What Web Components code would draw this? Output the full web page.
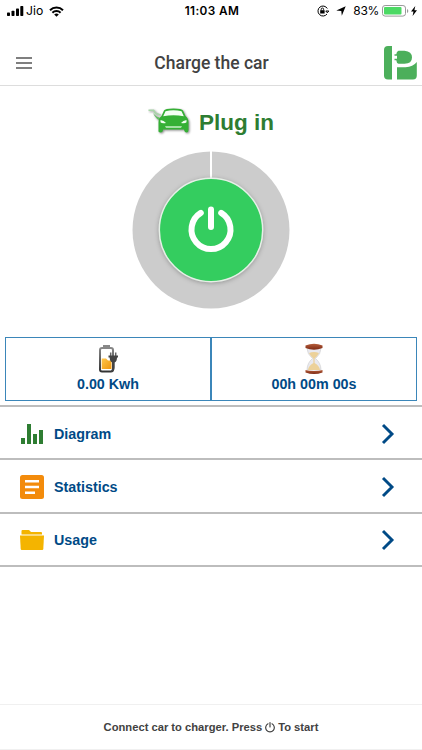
<!DOCTYPE html>
<html lang="en">
<head>
<meta charset="utf-8">
<title>Charge the car</title>
<style>
	body {
		margin: 0;
		background: #fff;
		font-family: "Liberation Sans", Arial, sans-serif;
	}
</style>
</head>
<body>
<charge-app></charge-app>

<script>
class BaseElement extends HTMLElement {
	constructor() {
		super();
		this.attachShadow({ mode: 'open' }).innerHTML = `${this._css()}${this._html()}`;
	}
}

class StatusBar extends BaseElement {
	_html() {
		return `
			<div class="left">
				<svg width="17" height="10" viewBox="0 0 17 10">
					<rect x="0" y="6.5" width="3" height="3.5" rx=".7"/>
					<rect x="4.5" y="4.7" width="3" height="5.3" rx=".7"/>
					<rect x="9" y="2.5" width="3" height="7.5" rx=".7"/>
					<rect x="13.3" y="0" width="3" height="10" rx=".7"/>
				</svg>
				<span class="carrier">Jio</span>
				<svg width="15" height="11" viewBox="0 0 15 11" fill="none" stroke="#000" stroke-width="2">
					<path d="M1 4.2a9.2 9.2 0 0 1 13 0"/>
					<path d="M3.4 6.7a5.8 5.8 0 0 1 8.2 0"/>
					<path d="M7.5 10.8 5.2 8.5a3.3 3.3 0 0 1 4.6 0z" fill="#000" stroke="none"/>
				</svg>
			</div>
			<span class="time">11:03 AM</span>
			<div class="right">
				<svg width="12" height="12" viewBox="0 0 12 12" fill="none" stroke="#000">
					<path d="M10.3 3.5A5 5 0 1 0 10 9M8.8 6h3l-1.5 1.8z" stroke-width="1"/>
					<rect x="3.2" y="5.2" width="4.4" height="3.3" fill="#000" stroke="none"/>
					<path d="M4.2 5.3V4.2a1.2 1.2 0 0 1 2.4 0v1.1" stroke-width=".9"/>
				</svg>
				<svg class="arrow" width="10" height="10" viewBox="0 0 10 10"><path d="M9.7.3 5.8 9.7 5.3 4.9.3 4.4z"/></svg>
				<span class="percent">83%</span>
				<svg class="battery" width="27" height="12" viewBox="0 0 27 12">
					<rect x=".5" y=".5" width="23" height="10.6" rx="2.6" fill="#fff" stroke="#999"/>
					<rect x="2" y="2" width="17.5" height="7.6" rx="1" fill="#4cd964"/>
					<path d="M25 4v4q1.3-.5 1.3-2T25 4" fill="#999"/>
				</svg>
				<svg width="6" height="10" viewBox="0 0 6 10"><path d="M4.3 0 0 5.6h2.5L1.6 10 6 4.2H3.4z"/></svg>
			</div>
		`;
	}

	_css() {
		return `
			<style>
				:host {
					display: grid;
					grid-template-columns: 1fr auto 1fr;
					align-items: center;
					height: 22px;
					padding: 0 5px 0 7px;
					box-sizing: border-box;
					color: #000;
					font: 12px/22px Inter, sans-serif;
				}
				.left, .right {
					display: flex;
					align-items: center;
				}
				.right {
					justify-content: flex-end;
				}
				.carrier {
					margin: 0 6px 0 2px;
					font-size: 12.2px;
				}
				.time {
					font-weight: 600;
					font-size: 11.8px;
					letter-spacing: .4px;
				}
				.percent {
					letter-spacing: -.3px;
				}
				.arrow {
					margin: 0 7px;
				}
				.battery {
					margin: 0 2px 0 3px;
				}
			</style>
		`;
	}
}

class AppHeader extends BaseElement {
	_html() {
		return `
			<svg class="menu" width="16" height="12" viewBox="0 0 16 12" stroke="#555" stroke-width="1.4">
				<path d="M0 1h16M0 6h16M0 11h16"/>
			</svg>
			<h1><slot></slot></h1>
			<svg class="logo" width="33" height="34" viewBox="0 0 33 34" fill="#4caf5b">
				<path d="M4 0H8V33.500H4Q0 33.500 0 29.500V4Q0 0 4 0z"/>
				<path d="M14.500 4.700H20.500Q28 5.300 28 11.500T20.500 17.800H14.500Q12.500 17 12.300 14.200H10.500V12.700H13V9.700H10.500V8.200H12.300Q12.500 5.500 14.500 4.700z"/>
				<path d="M13 21.200H21.500Q29 21 32.800 16V29.500Q32.800 33.500 29 33.500H13z"/>
			</svg>
		`;
	}

	_css() {
		return `
			<style>
				:host {
					display: grid;
					grid-template-columns: 35px 1fr 40px;
					align-items: center;
					height: 64px;
					padding: 18px 5px 0 16px;
					box-sizing: border-box;
					border-bottom: 1px solid #ddd;
				}
				h1 {
					margin: 1px 5px 0 0;
					text-align: center;
					color: #424242;
					font: 500 17.5px/24px Roboto, sans-serif;
				}
				.logo {
					justify-self: end;
				}
			</style>
		`;
	}
}

class PlugHeading extends BaseElement {
	_html() {
		return `
			<svg width="44" height="30" viewBox="0 0 44 30">
				<g class="car">
					<path d="M.5 2.500H6L8 5.500 13 7.500 12.500 8.500 7 7 5 4H.5z" fill="#a9d6a9"/>
					<path d="M5 6Q8 10 14 11.500V14Q8 13 5 6z" fill="#66bd66"/>
					<path d="M16 3.500Q17 1.500 25.500 1.500T35 3.500L37.500 9Q40.500 11 40.500 15.500V23Q40.500 25.500 38.500 25.500T36 22.500H15Q15 25.500 12.500 25.500T10.500 23V15.500Q10.500 11 13.500 9z" fill="#35b035"/>
					<path d="M17.500 4.300Q25.500 2 33.500 4.300L35.800 9.300Q25.500 7.300 15.200 9.300z" fill="#f3fff3"/>
					<path d="M12.500 13Q16 13.300 18 16 14 16.800 12.500 15.300zM38.500 13Q35 13.300 33 16 37 16.800 38.500 15.300z" fill="#f0fff0"/>
					<path d="M17 19.200H34L33 20.700H18z" fill="#c9f0c9"/>
				</g>
			</svg>
			<h2><slot></slot></h2>
		`;
	}

	_css() {
		return `
			<style>
				:host {
					display: flex;
					justify-content: center;
					align-items: center;
					gap: 7px;
					height: 32px;
				}
				h2 {
					margin: 1px 0 0;
					color: #2e7d32;
					font-size: 22.5px;
					line-height: 28px;
				}
				.car {
					filter: drop-shadow(1px 1.5px 1px #888);
				}
			</style>
		`;
	}
}

class PowerDial extends BaseElement {
	_html() {
		return `
			<svg width="158" height="158" viewBox="0 0 158 158">
				<circle cx="79" cy="79" r="78.500" fill="#ccc"/>
				<path d="M79 0v28" stroke="#fff" stroke-width="2"/>
				<g class="button">
					<circle cx="79" cy="79" r="51.700" fill="#34cd5f" stroke="#e6efe7" stroke-width="1.500"/>
				</g>
				<path d="M68.800 61.900a19.500 19.500 0 1 0 20.400 0M79 58.500v17.500" fill="none" stroke="#fff" stroke-width="6" stroke-linecap="round"/>
			</svg>
		`;
	}

	_css() {
		return `
			<style>
				:host {
					display: flex;
					justify-content: center;
				}
				.button {
					filter: drop-shadow(0 1px 2px rgba(0, 0, 0, .25));
				}
			</style>
		`;
	}
}

class StatBox extends BaseElement {
	_html() {
		return `<slot name="icon"></slot><span><slot></slot></span>`;
	}

	_css() {
		return `
			<style>
				:host {
					display: flex;
					flex: 1;
					flex-direction: column;
					align-items: center;
					padding-top: 5px;
					border: 1px solid #3b86b9;
					color: #004a86;
					font-weight: bold;
					font-size: 14.3px;
					line-height: 18px;
				}
				::slotted(svg) {
					display: block;
				}
			</style>
		`;
	}
}

class MenuRow extends BaseElement {
	_html() {
		return `
			<slot name="icon"></slot>
			<span><slot></slot></span>
			<svg width="14" height="22" viewBox="0 0 14 22" fill="none" stroke="#004a86" stroke-width="2.900">
				<path d="M2 2l9 9-9 9"/>
			</svg>
		`;
	}

	_css() {
		return `
			<style>
				:host {
					display: flex;
					align-items: center;
					gap: 9px;
					height: 53.3px;
					padding: 2px 27px 0 19px;
					box-sizing: border-box;
					border-bottom: 2px solid #bdbdbd;
					color: #004a86;
					font-weight: bold;
					font-size: 14.3px;
				}
				span {
					flex: 1;
				}
			</style>
		`;
	}
}

class HintBar extends BaseElement {
	_html() {
		return `
			<p>
				<slot></slot>
				<svg width="10" height="11" viewBox="0 0 10 11" fill="none" stroke="#424242" stroke-width="1.200" stroke-linecap="round">
					<path d="M3 1.800a4.300 4.300 0 1 0 4 0M5 .6v4.400"/>
				</svg>
				<slot name="end"></slot>
			</p>
		`;
	}

	_css() {
		return `
			<style>
				:host {
					display: flex;
					justify-content: center;
					align-items: center;
					height: 46px;
					box-sizing: border-box;
					border: solid #f0f0f0;
					border-width: 1px 0;
				}
				p {
					display: flex;
					align-items: center;
					gap: 3px;
					margin: 0;
					color: #424242;
					font-weight: bold;
					font-size: 11.2px;
				}
			</style>
		`;
	}
}

class ChargeApp extends BaseElement {
	_html() {
		return `
			<status-bar></status-bar>
			<app-header>Charge the car</app-header>
			<main>
				<plug-heading>Plug in</plug-heading>
				<power-dial></power-dial>
				<div class="stats">
					<stat-box>
						<svg slot="icon" width="22" height="32" viewBox="-1 0 22 32">
							<defs>
								<linearGradient id="charge" x2="1" y2="1"><stop stop-color="#ffc64a"/><stop offset="1" stop-color="#ee960d"/></linearGradient>
								<linearGradient id="shell" x2="0" y2="1"><stop stop-color="#888"/><stop offset="1" stop-color="#333"/></linearGradient>
							</defs>
							<path d="M5 2h7v4H5z" fill="#888"/>
							<rect x="2" y="5" width="13" height="23.500" rx="2" fill="#fff" stroke="url(#shell)" stroke-width="2"/>
							<path d="M3.700 15.500H8l2 2h3.500V26H3.700z" fill="url(#charge)"/>
							<path d="M12.700 9.500v4M17.700 9.500v4" stroke="#666" stroke-width="1.500"/>
							<path d="M10.500 12.500h9.500v2h-1q0 4-2.300 5v5q0 4-4 4.500l.8-2q.7-.8.700-2.500v-5q-2.500-1-2.500-5h-1.200z" fill="#444"/>
						</svg>
						0.00 Kwh
					</stat-box>
					<stat-box>
						<svg slot="icon" width="18" height="32" viewBox="0 0 18 32">
							<defs><linearGradient id="wood" x2="0" y2="1"><stop stop-color="#b55d3b"/><stop offset="1" stop-color="#7e2a14"/></linearGradient></defs>
							<path d="M2 5h14q0 6-5.500 10.500Q16 20 16 27H2q0-7 5.500-11.500Q2 11 2 5z" fill="#e9e9ef" stroke="#ccc" stroke-width=".6"/>
							<path d="M4 10q5-2 10 0-1.500 3-4.400 5.500V20q5 3 5.400 7H3q.4-4 5.400-7v-4.500Q5.500 13 4 10z" fill="#ecd199"/>
							<path d="M.5 2.500Q9-.8 17.500 2.500V5Q9 8.300.5 5z" fill="url(#wood)"/>
							<path d="M.5 27q3 .9 8.500.9t8.500-.9v2.500Q9 32.500.5 29.500z" fill="url(#wood)"/>
						</svg>
						00h 00m 00s
					</stat-box>
				</div>
				<nav>
					<menu-row>
						<svg slot="icon" width="26" height="22" viewBox="0 0 26 22" fill="#2e7d32">
							<path d="M2 15h4v6H2zM8 1h4v20H8zM14 11h4v10h-4zM20 7h4v14h-4z"/>
						</svg>
						Diagram
					</menu-row>
					<menu-row>
						<svg slot="icon" width="26" height="26" viewBox="0 0 26 26">
							<rect x="1" y="1" width="24" height="24" rx="2.500" fill="#f38b0b"/>
							<path d="M6 7.200h14M6 13h14M6 18.800h10" stroke="#fff" stroke-width="2.500"/>
						</svg>
						Statistics
					</menu-row>
					<menu-row>
						<svg slot="icon" width="26" height="22" viewBox="0 0 26 22" fill="#f4b400">
							<path d="M2.500 5.500V2q0-1 1-1H10l2 2h10q1 0 1 1v1.500z"/>
							<path d="M1 6.500h24L24.300 20q-.1 1-1 1H2.700q-.9 0-1-1z"/>
						</svg>
						Usage
					</menu-row>
				</nav>
			</main>
			<hint-bar>Connect car to charger. Press<span slot="end">To start</span></hint-bar>
		`;
	}

	_css() {
		return `
			<style>
				:host {
					display: flex;
					flex-direction: column;
					height: 750px;
					overflow: hidden;
				}
				main {
					flex: 1;
					padding-top: 20px;
				}
				power-dial {
					margin-top: 13px;
				}
				.stats {
					display: flex;
					height: 63.5px;
					margin: 28px 5px 4.5px;
				}
				nav {
					border-top: 2px solid #bdbdbd;
				}
			</style>
		`;
	}
}

customElements.define('status-bar', StatusBar);
customElements.define('app-header', AppHeader);
customElements.define('plug-heading', PlugHeading);
customElements.define('power-dial', PowerDial);
customElements.define('stat-box', StatBox);
customElements.define('menu-row', MenuRow);
customElements.define('hint-bar', HintBar);
customElements.define('charge-app', ChargeApp);
</script>
</body>
</html>
